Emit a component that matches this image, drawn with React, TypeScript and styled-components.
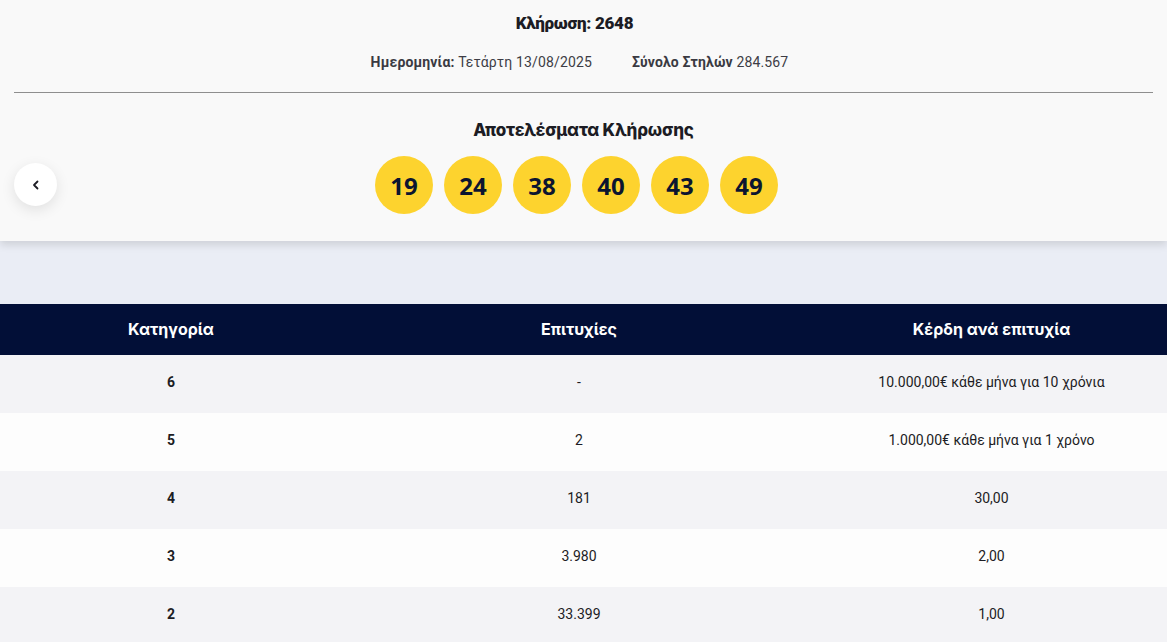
import React from "react";
import styled, { createGlobalStyle } from "styled-components";

const GlobalStyle = createGlobalStyle`
  html, body {
    margin: 0;
    padding: 0;
    background: #eaedf5;
    font-family: Roboto, "Noto Sans", sans-serif;
    color: #1c1c24;
  }
`;

const numbers = [19, 24, 38, 40, 43, 49];

const rows = [
  { cat: "6", wins: "-", prize: "10.000,00€ κάθε μήνα για 10 χρόνια" },
  { cat: "5", wins: "2", prize: "1.000,00€ κάθε μήνα για 1 χρόνο" },
  { cat: "4", wins: "181", prize: "30,00" },
  { cat: "3", wins: "3.980", prize: "2,00" },
  { cat: "2", wins: "33.399", prize: "1,00" },
];

function App() {
  return (
    <Page>
      <GlobalStyle />
      <DrawPanel>
        <Title>Κλήρωση: 2648</Title>
        <InfoLine>
          <span>
            <b>Ημερομηνία:</b> Τετάρτη 13/08/2025
          </span>
          <span>
            <b>Σύνολο Στηλών</b> 284.567
          </span>
        </InfoLine>
        <Divider />
        <Subtitle>Αποτελέσματα Κλήρωσης</Subtitle>
        <BallsRow>
          <BackButton aria-label="previous">
            <svg width="12" height="12" viewBox="0 0 12 12" fill="none">
              <path
                d="M7.5 2.5 4 6l3.5 3.5"
                stroke="#1c1c24"
                strokeWidth="1.8"
                strokeLinecap="round"
                strokeLinejoin="round"
              />
            </svg>
          </BackButton>
          {numbers.map((n) => (
            <Ball key={n}>{n}</Ball>
          ))}
        </BallsRow>
      </DrawPanel>
      <Spacer />
      <Table>
        <HeadRow>
          <HeadCell>Κατηγορία</HeadCell>
          <HeadCell>Επιτυχίες</HeadCell>
          <HeadCell>Κέρδη ανά επιτυχία</HeadCell>
        </HeadRow>
        {rows.map((r, i) => (
          <Row key={r.cat} $striped={i % 2 === 0}>
            <Cell $bold>{r.cat}</Cell>
            <Cell>{r.wins}</Cell>
            <Cell>{r.prize}</Cell>
          </Row>
        ))}
      </Table>
    </Page>
  );
}

export default App;

const Page = styled.div`
  width: 1167px;
  min-height: 642px;
  overflow: hidden;
`;

const DrawPanel = styled.section`
  background: #f9f9f9;
  height: 241px;
  box-sizing: border-box;
  padding: 11px 14px 0;
  display: flex;
  flex-direction: column;
  align-items: center;
  box-shadow: 0 4px 8px rgba(0, 0, 0, 0.12);
  position: relative;
  z-index: 1;
`;

const Title = styled.h1`
  margin: 0 18px 0 0;
  font-family: Roboto, sans-serif;
  font-size: 17px;
  font-weight: 900;
  letter-spacing: -0.3px;
  line-height: 24px;
  color: #1c1c24;
`;

const InfoLine = styled.div`
  margin: 17px 8px 0 0;
  display: flex;
  gap: 40px;
  font-size: 14px;
  letter-spacing: 0.15px;
  line-height: 20px;
  color: #3d3d45;

  b {
    font-weight: 700;
    color: #3a3a42;
  }
`;

const Divider = styled.hr`
  align-self: stretch;
  margin: 20px 0 0;
  border: none;
  border-top: 1px solid #8e8e8e;
`;

const Subtitle = styled.h2`
  margin: 25px 0 0;
  font-family: Inter, Roboto, sans-serif;
  font-size: 17px;
  font-weight: 800;
  letter-spacing: -0.2px;
  line-height: 24px;
  color: #1c1c24;
`;

const BallsRow = styled.div`
  align-self: stretch;
  margin-top: 14px;
  padding-right: 14px;
  display: flex;
  justify-content: center;
  gap: 11px;
  position: relative;
`;

const BackButton = styled.button`
  position: absolute;
  left: 0;
  top: 7px;
  width: 43px;
  height: 43px;
  border-radius: 50%;
  border: none;
  background: #ffffff;
  box-shadow: 0 4px 14px rgba(0, 0, 0, 0.1);
  display: flex;
  align-items: center;
  justify-content: center;
  padding: 0;
  cursor: pointer;
`;

const Ball = styled.div`
  width: 58px;
  height: 58px;
  border-radius: 50%;
  background: #fdd32e;
  display: flex;
  align-items: center;
  justify-content: center;
  font-family: "Open Sans", sans-serif;
  font-size: 24px;
  font-weight: 700;
  color: #0c1530;
`;

const Spacer = styled.div`
  height: 63px;
`;

const Table = styled.div`
  display: flex;
  flex-direction: column;
`;

const HeadRow = styled.div`
  display: grid;
  grid-template-columns: 342fr 474fr 351fr;
  height: 51px;
  background: #020f37;
  align-items: center;
`;

const HeadCell = styled.div`
  text-align: center;
  color: #ffffff;
  font-family: Inter, Roboto, sans-serif;
  font-size: 16px;
  font-weight: 700;
  padding-bottom: 2px;
`;

const Row = styled.div<{ $striped: boolean }>`
  display: grid;
  grid-template-columns: 342fr 474fr 351fr;
  height: 58px;
  align-items: center;
  background: ${(p) => (p.$striped ? "#f3f3f6" : "#fdfdfd")};
`;

const Cell = styled.div<{ $bold?: boolean }>`
  text-align: center;
  font-size: 14px;
  line-height: 18px;
  padding-bottom: 4px;
  color: #1c1c24;
  font-weight: ${(p) => (p.$bold ? 700 : 400)};
`;
